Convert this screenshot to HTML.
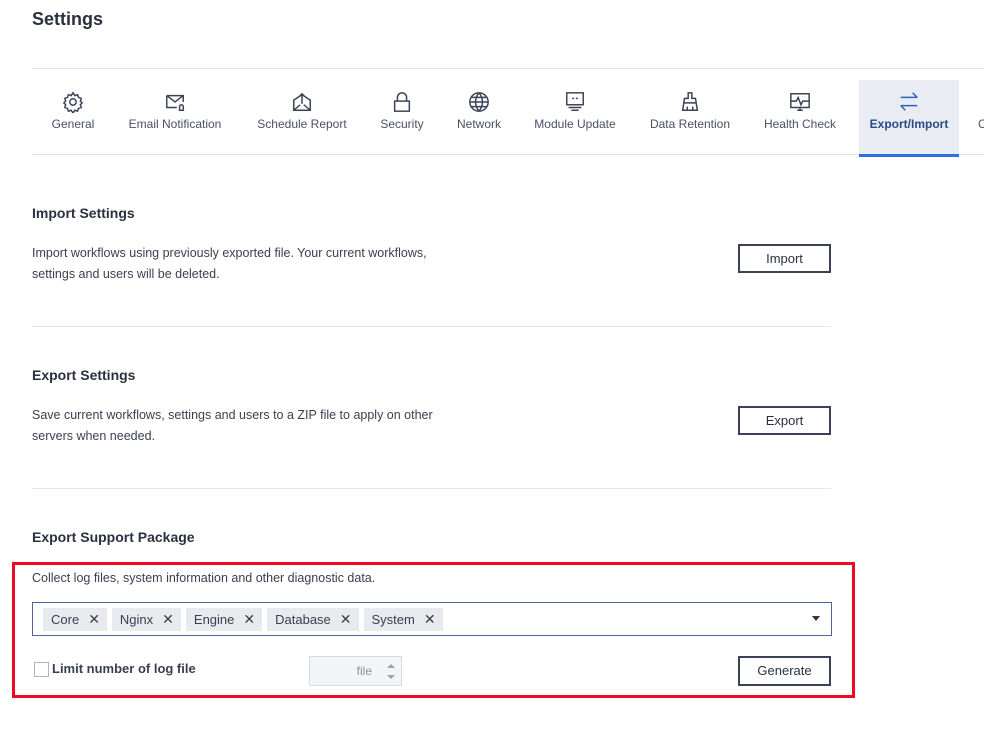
<!DOCTYPE html><html><head><style>
body{margin:0;width:984px;height:732px;background:#fff;font-family:"Liberation Sans",sans-serif;color:#2b3040;position:relative;overflow:hidden}
.a{position:absolute}
h1{position:absolute;left:32px;top:9px;margin:0;font-size:18px;font-weight:bold;color:#2b3040}
.tab{position:absolute;top:80px;height:74px;text-align:center;font-size:12px;color:#4a5066}
.tab svg{display:block;margin:11px auto 4px;width:22px;height:22px}
.t{font-size:14px;font-weight:bold}
.p{font-size:12.5px;line-height:21px;color:#3a3f50}
.btn{position:absolute;left:738px;width:93px;height:29px;border:2px solid #3b4257;box-sizing:border-box;font-size:13px;text-align:center;line-height:25px}
.hr{position:absolute;left:32px;width:799px;height:1px;background:#e3e6ee}
.tag{display:inline-block;background:#e9eaed;height:23px;line-height:23px;padding:0 7px 0 8px;margin-right:5px;font-size:13px;color:#3a3f50}
.tag b{font-weight:normal;margin-left:9px;font-size:14px}
</style></head><body>
<h1>Settings</h1>
<div class="a" style="left:32px;top:68px;width:952px;height:1px;background:#dfe2ea"></div>
<div class="a" style="left:32px;top:154px;width:952px;height:1px;background:#dfe2ea"></div>
<div class="a" style="left:859px;top:80px;width:100px;height:74px;background:#e9ecf3"></div>
<div class="a" style="left:859px;top:154px;width:100px;height:3px;background:#2f6fe4"></div>
<div class="tab" style="left:42px;width:62px"><svg viewBox="0 0 24 24" fill="none" stroke="#3b4257" stroke-width="1.6"><circle cx="12" cy="12" r="3.5"/><path d="M12 2l2 3 3-1 1 3 3 1-1 3 2 2-2 2 1 3-3 1-1 3-3-1-2 3-2-3-3 1-1-3-3-1 1-3-2-2 2-2-1-3 3-1 1-3 3 1z"/></svg>General</div>
<div class="tab" style="left:120px;width:110px"><svg viewBox="0 0 24 24" fill="none" stroke="#3b4257" stroke-width="1.6"><path d="M3 5h18v7M3 5v13h11M3 5l9 7 9-7"/><path d="M16 21h6M17 20v-3a2 2 0 014 0v3"/></svg>Email Notification</div>
<div class="tab" style="left:250px;width:104px"><svg viewBox="0 0 24 24" fill="none" stroke="#3b4257" stroke-width="1.6"><path d="M3 10l9-6 9 6v11H3zM3 21l7-6M21 21l-7-6M12 14V3M9 6l3-3 3 3"/></svg>Schedule Report</div>
<div class="tab" style="left:372px;width:60px"><svg viewBox="0 0 24 24" fill="none" stroke="#3b4257" stroke-width="1.6"><rect x="4" y="11" width="16" height="11"/><path d="M7 11V7a5 5 0 0110 0v4"/></svg>Security</div>
<div class="tab" style="left:450px;width:58px"><svg viewBox="0 0 24 24" fill="none" stroke="#3b4257" stroke-width="1.6"><circle cx="12" cy="12" r="10"/><path d="M2 12h20M12 2c-5 6-5 14 0 20M12 2c5 6 5 14 0 20M4 7h16M4 17h16"/></svg>Network</div>
<div class="tab" style="left:528px;width:94px"><svg viewBox="0 0 24 24" fill="none" stroke="#3b4257" stroke-width="1.6"><rect x="3" y="2" width="18" height="13"/><path d="M9 8h2M13 8h2M5 18h14M8 21h8"/></svg>Module Update</div>
<div class="tab" style="left:644px;width:92px"><svg viewBox="0 0 24 24" fill="none" stroke="#3b4257" stroke-width="1.6"><path d="M10 2h4v6h4l2 13H4l2-13h4zM6 13h12M9 21v-4M15 21v-4"/></svg>Data Retention</div>
<div class="tab" style="left:758px;width:84px"><svg viewBox="0 0 24 24" fill="none" stroke="#3b4257" stroke-width="1.6"><rect x="2" y="3" width="20" height="15"/><path d="M2 11h6l2-4 3 8 2-4h7M9 21h6M12 18v3"/></svg>Health Check</div>
<div class="tab" style="left:859px;width:100px;color:#2c4a86;font-weight:bold"><svg viewBox="0 0 24 24" fill="none" stroke="#2f5fbf" stroke-width="1.6"><path d="M3 7h18M16 2l5 5M21 16H3M8 21l-5-5"/></svg>Export/Import</div>
<div class="tab" style="left:978px;width:20px;text-align:left"><div style="height:37px"></div>C</div>

<div class="a t" style="left:32px;top:205px">Import Settings</div>
<div class="a p" style="left:32px;top:243px">Import workflows using previously exported file. Your current workflows,<br>settings and users will be deleted.</div>
<div class="btn" style="top:244px">Import</div>
<div class="hr" style="top:326px"></div>
<div class="a t" style="left:32px;top:367px">Export Settings</div>
<div class="a p" style="left:32px;top:405px">Save current workflows, settings and users to a ZIP file to apply on other<br>servers when needed.</div>
<div class="btn" style="top:406px">Export</div>
<div class="hr" style="top:488px"></div>
<div class="a t" style="left:32px;top:529px">Export Support Package</div>
<div class="a" style="left:12px;top:562px;width:843px;height:136px;border:3px solid #ee0a24;box-sizing:border-box"></div>
<div class="a p" style="left:32px;top:568px">Collect log files, system information and other diagnostic data.</div>
<div class="a" style="left:32px;top:602px;width:800px;height:34px;border:1px solid #4f6699;box-sizing:border-box;padding:5px 10px"><span class="tag">Core<b>✕</b></span><span class="tag">Nginx<b>✕</b></span><span class="tag">Engine<b>✕</b></span><span class="tag">Database<b>✕</b></span><span class="tag">System<b>✕</b></span></div>
<div class="a" style="left:812px;top:616px;border:4px solid transparent;border-top:5px solid #333"></div>
<div class="a" style="left:34px;top:662px;width:13px;height:13px;border:1px solid #b0b4bd"></div>
<div class="a" style="left:52px;top:661px;font-size:13px;font-weight:bold;color:#3a3f50">Limit number of log file</div>
<div class="a" style="left:309px;top:656px;width:93px;height:30px;border:1px solid #d7dbe4;background:#f2f4f8;box-sizing:border-box;font-size:12px;color:#8a8f9c;line-height:28px;text-align:right;padding-right:29px">file</div>
<div class="a" style="left:387px;top:660px;border:4px solid transparent;border-bottom:4px solid #9aa0ad"></div>
<div class="a" style="left:387px;top:675px;border:4px solid transparent;border-top:4px solid #9aa0ad"></div>
<div class="btn" style="top:656px;height:30px;line-height:26px">Generate</div>
</body></html>
